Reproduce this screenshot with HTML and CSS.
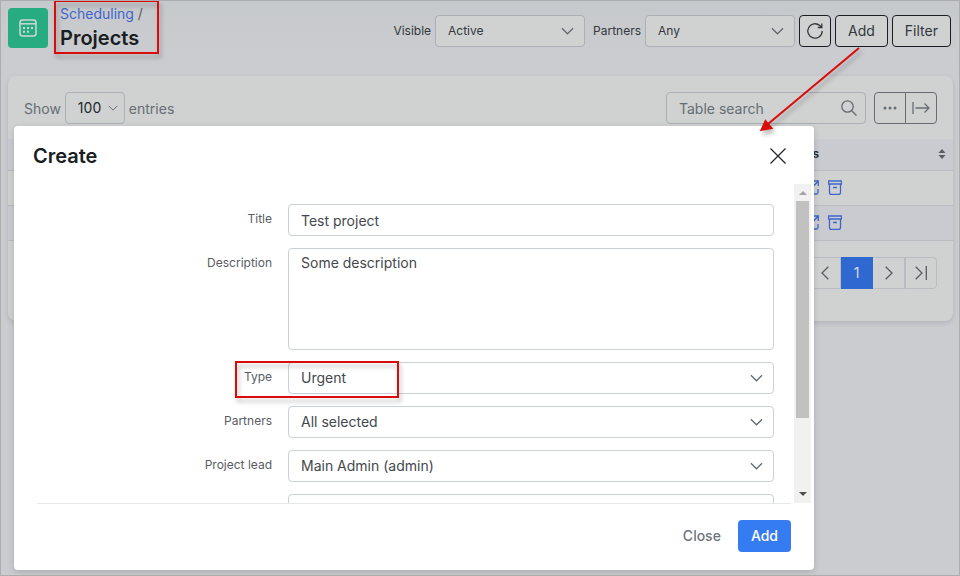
FILE: index.html
```html
<!DOCTYPE html>
<html lang="en">
<head>
<meta charset="utf-8">
<title>Projects</title>
<link rel="stylesheet" href="styles.css">
</head>
<body>
<svg class="sprite" aria-hidden="true">
  <symbol id="chevron" viewBox="0 0 14 8"><path d="M1 1l6 6 6-6"/></symbol>
  <symbol id="archive" viewBox="0 0 14 15"><path d="M.5 1h13v3H.5zM1.500 4v8.500q0 2 2 2h7q2 0 2-2V4M5 7.500h4"/></symbol>
  <symbol id="link" viewBox="0 0 14 15"><path d="M6 1H2.500Q1 1 1 2.500v10Q1 14 2.500 14h9q1.500 0 1.500-1.500V9M6 8.500l7-7M9 1h4.300V6"/></symbol>
</svg>
<div class="page">
  <header class="topbar">
    <div class="brand">
      <svg viewBox="0 0 18 18"><rect x="1" y="1" width="16" height="16" rx="2.500"/><path d="M1 4.800h16"/><path class="dots" d="M8 9h2M12 9h2M4 9h2M4 12.800h2M8 12.800h2"/></svg>
    </div>
    <div class="heading">
      <nav class="crumbs"><a href="#">Scheduling</a> /</nav>
      <h1>Projects</h1>
    </div>
    <div class="filters">
      <label for="visible">Visible</label>
      <span class="pick filter-pick"><select id="visible"><option>Active</option></select><svg><use href="#chevron"/></svg></span>
      <label for="partner-filter">Partners</label>
      <span class="pick filter-pick"><select id="partner-filter"><option>Any</option></select><svg><use href="#chevron"/></svg></span>
      <button class="btn square" type="button" aria-label="Refresh"><svg width="18" height="18" viewBox="0 0 18 18"><path d="M16.200 9A7.200 7.200 0 1 1 14 3.800l1.500 1.500M15.800 1.500v4h-4"/></svg></button>
      <button class="btn" type="button">Add</button>
      <button class="btn" type="button">Filter</button>
    </div>
  </header>

  <main class="card">
    <div class="toolbar">
      <label for="length">Show</label>
      <span class="pick length-pick"><select id="length"><option>100</option></select><svg><use href="#chevron"/></svg></span>
      <span class="after">entries</span>
      <div class="search">
        <input type="text" placeholder="Table search" aria-label="Table search">
        <svg viewBox="0 0 16 16"><circle cx="6.500" cy="6.500" r="5.700"/><path d="M10.700 10.700l4.800 4.800"/></svg>
      </div>
      <div class="group">
        <button type="button" aria-label="More"><svg class="more" width="14" height="4" viewBox="0 0 14 4"><circle cx="2" cy="2" r="1.500"/><circle cx="7" cy="2" r="1.500"/><circle cx="12" cy="2" r="1.500"/></svg></button>
        <button type="button" aria-label="Expand"><svg width="18" height="12" viewBox="0 0 18 12"><path d="M1 0v12M3.500 6H17M12.500 1.500L17 6l-4.500 4.500"/></svg></button>
      </div>
    </div>
    <table>
      <thead>
        <tr><th class="rest"></th><th class="actions"><div>Actions<svg width="8" height="10" viewBox="0 0 8 10"><path d="M.5 4L4 0l3.500 4zM.5 6L4 10l3.500-4z"/></svg></div></th></tr>
      </thead>
      <tbody>
        <tr><td></td><td><div class="icons"><a href="#" aria-label="Open"><svg><use href="#link"/></svg></a><a href="#" aria-label="Archive"><svg><use href="#archive"/></svg></a></div></td></tr>
        <tr><td></td><td><div class="icons"><a href="#" aria-label="Open"><svg><use href="#link"/></svg></a><a href="#" aria-label="Archive"><svg><use href="#archive"/></svg></a></div></td></tr>
      </tbody>
    </table>
    <nav class="pager" aria-label="Pages">
      <button type="button" aria-label="Previous"><svg width="8" height="14" viewBox="0 0 8 14"><path d="M7.300.7L1 7l6.300 6.300"/></svg></button>
      <button type="button" class="current">1</button>
      <button type="button" aria-label="Next"><svg width="8" height="14" viewBox="0 0 8 14"><path d="M.7.7L7 7 .7 13.300"/></svg></button>
      <button type="button" aria-label="Last"><svg width="12" height="14" viewBox="0 0 12 14"><path d="M.7.7L7 7 .7 13.300M11.300 0v14"/></svg></button>
    </nav>
  </main>

  <section class="modal" role="dialog" aria-labelledby="modal-title">
    <header class="modal-head">
      <h2 id="modal-title">Create</h2>
      <button type="button" aria-label="Close dialog"><svg width="16" height="16" viewBox="0 0 16 16"><path d="M.5.5l15 15M15.500.5l-15 15"/></svg></button>
    </header>
    <div class="modal-body">
      <form class="form">
        <label for="title">Title</label>
        <input id="title" type="text" value="Test project">
        <label for="description">Description</label>
        <textarea id="description">Some description</textarea>
        <label for="type">Type</label>
        <span class="pick"><select id="type"><option>Urgent</option></select><svg><use href="#chevron"/></svg></span>
        <label for="partners">Partners</label>
        <span class="pick"><select id="partners"><option>All selected</option></select><svg><use href="#chevron"/></svg></span>
        <label for="lead">Project lead</label>
        <span class="pick"><select id="lead"><option>Main Admin (admin)</option></select><svg><use href="#chevron"/></svg></span>
        <span></span>
        <span class="pick"><select aria-label="Next field"></select></span>
      </form>
      <div class="scrollbar" aria-hidden="true">
        <svg class="up" viewBox="0 0 8 4"><path d="M0 4l4-4 4 4z"/></svg>
        <div class="track"><div class="thumb"></div></div>
        <svg class="down" viewBox="0 0 8 4"><path d="M0 0l4 4 4-4z"/></svg>
      </div>
    </div>
    <footer class="modal-foot">
      <button type="button" class="plain">Close</button>
      <button type="button" class="primary">Add</button>
    </footer>
  </section>

  <svg class="marks" width="960" height="576" viewBox="0 0 960 576" aria-hidden="true">
    <rect x="55" y="1" width="103" height="52"/>
    <rect x="236" y="362" width="162" height="35"/>
    <path d="M859 48L768 124"/>
    <path class="tip" d="M761.500 130l4-9 6 7z"/>
  </svg>
</div>
</body>
</html>
```
FILE: styles.css
```css
* { box-sizing: border-box; }

body {
  margin: 0;
  font: 14px/20px Inter, "Liberation Sans", sans-serif;
  color: #575d63;
  background: #cbccd0;
}

button, input, select, textarea {
  margin: 0;
  font: inherit;
  color: inherit;
}

svg { fill: none; stroke: currentColor; stroke-width: 1.300; flex: none; }
h1, h2 { margin: 0; font-weight: 600; color: #191e22; }
a { color: #3f65cc; text-decoration: none; }

.sprite { position: absolute; width: 0; height: 0; }

.page {
  position: relative;
  min-height: 100vh;
  padding: 0 6px 0 7px;
  border: 1px solid #adadad;
  background: linear-gradient(#c6c9cc, #cbccd0 60px);
  overflow: hidden;
}

/* Top bar */
.topbar { display: flex; height: 75px; padding: 3px 2px 0 0; }

.brand {
  display: grid;
  place-items: center;
  width: 40px;
  height: 40px;
  margin: 4px 12px 0 0;
  border-radius: 4px;
  background: #27ab80;
  color: #d0d7d2;
}
.brand svg { width: 18px; height: 18px; stroke-width: 1.500; }
.brand .dots { stroke-width: 2; }

.crumbs { line-height: 20px; }
.heading h1 { font-size: 20px; line-height: 28px; }

.filters {
  display: flex;
  align-items: center;
  gap: 4px;
  height: 32px;
  margin: 11px 0 0 auto;
  font-size: 12px;
  color: #33383d;
}
.filter-pick { width: 150px; }
.filter-pick + label { margin-left: 4px; }

.btn {
  height: 32px;
  padding: 0 12px;
  border: 1px solid #191e22;
  border-radius: 4px;
  background: #d0d2d1;
  font-size: 14px;
}
.btn.square { display: grid; place-items: center; width: 32px; padding: 0; }

/* Select boxes with a drawn arrow */
.pick { position: relative; display: block; height: 32px; }
.pick select {
  appearance: none;
  width: 100%;
  height: 32px;
  padding: 0 12px;
  border: 1px solid #aab0b6;
  border-radius: 4px;
  background: #d0d2d1;
}
.pick svg {
  position: absolute;
  right: 11px;
  top: 12px;
  width: 13px;
  height: 8px;
  pointer-events: none;
  color: #60676d;
}

/* Card */
.card {
  height: 245px;
  padding-top: 16px;
  border-radius: 8px;
  background: #d0d2d1;
  box-shadow: 0 2px 5px rgba(80, 85, 105, .2);
}

.toolbar {
  display: flex;
  align-items: center;
  gap: 4px;
  padding: 0 16px;
  color: #666d73;
}
.toolbar label, .toolbar .after { padding-top: 2px; }
.length-pick { width: 60px; color: #24282c; }
.length-pick svg { right: 7px; width: 10px; }

.search { position: relative; width: 200px; margin-left: auto; }
.search input {
  display: block;
  width: 100%;
  height: 32px;
  padding: 1px 12px 0;
  border: 1px solid #aab0b6;
  border-radius: 4px;
  background: transparent;
}
.search input::placeholder { color: #666d73; opacity: 1; }
.search svg { position: absolute; right: 9px; top: 8px; width: 16px; height: 16px; }

.group { display: flex; margin-left: 4px; }
.group button {
  display: grid;
  place-items: center;
  width: 32px;
  height: 32px;
  padding: 0;
  border: 1px solid #666d73;
  border-radius: 4px 0 0 4px;
  background: transparent;
}
.group button + button { margin-left: -1px; border-radius: 0 4px 4px 0; }
.more { fill: currentColor; stroke: none; }

table { width: 100%; margin-top: 15px; border-collapse: collapse; table-layout: fixed; }
th, td { height: 35px; padding: 0 8px; border-bottom: 1px solid #b9bdc1; text-align: left; }
th { height: 31px; font-size: 12px; font-weight: 600; color: #24282c; }
thead tr, tbody tr:nth-child(even) { background: #cacbd0; }
.actions { width: 190px; }
.actions div { display: flex; align-items: center; justify-content: space-between; }
.actions svg { fill: #575d63; stroke: none; }
.icons { display: flex; justify-content: flex-start; gap: 9px; padding-left: 34px; }
.icons a { display: flex; }
.icons svg { width: 14px; height: 15px; }
th.actions { padding: 0 7px 0 12px; }

.pager { display: flex; justify-content: flex-end; padding: 16px 16px 0; }
.pager button {
  display: grid;
  place-items: center;
  width: 32px;
  height: 32px;
  padding: 0;
  border: 1px solid #b9bdc1;
  border-left-width: 0;
  background: transparent;
}
.pager button:last-child { border-left-width: 1px; border-radius: 0 4px 4px 0; }
.pager .current { border-color: #2e68d0; background: #2e68d0; color: #d8dde2; }

/* Dialog */
.modal {
  position: absolute;
  top: 125px;
  left: 13px;
  right: 145px;
  border-radius: 4px;
  background: #fff;
  box-shadow: 0 2px 6px rgba(40, 45, 60, .2);
}
.modal-head {
  display: flex;
  align-items: center;
  justify-content: space-between;
  height: 58px;
  padding: 2px 28px 0 19px;
}
.modal-head h2 { font-size: 20px; line-height: 28px; }
.modal-head button { display: flex; padding: 0; border: 0; background: none; color: #24282c; }

.modal-body { display: flex; height: 319px; padding-right: 3px; overflow: hidden; }
.form {
  flex: 1;
  display: grid;
  grid-template-columns: 235px 1fr;
  grid-auto-rows: max-content;
  gap: 12px 16px;
  padding: 20px 20px 0 23px;
}
.form label { padding-top: 5px; font-size: 12px; text-align: right; }
.form input, .form textarea {
  display: block;
  width: 100%;
  height: 32px;
  padding: 1px 12px 0;
  border: 1px solid #cbcfd8;
  border-radius: 4px;
  background: #fff;
  color: #43484d;
  resize: none;
}
.form textarea { height: 102px; padding-top: 4px; }
.form select { border-color: #cbcfd8; background: #fff; color: #43484d; }

.scrollbar {
  display: flex;
  flex-direction: column;
  align-items: center;
  width: 17px;
  padding: 7px 2px;
  background: #f1f1f1;
}
.scrollbar svg { width: 8px; height: 4px; fill: #505050; stroke: none; }
.scrollbar .up { fill: #a3a3a3; }
.track { flex: 1; align-self: stretch; padding-top: 6px; }
.thumb { height: 217px; background: #c1c1c1; }

.modal-foot {
  display: flex;
  justify-content: flex-end;
  gap: 4px;
  margin: 0 23px;
  padding: 16px 0 18px;
  border-top: 1px solid #e7e8eb;
}
.modal-foot button { height: 32px; padding: 0 13px; border: 0; border-radius: 4px; font-weight: 500; }
.plain { background: none; color: #6c757d; }
.modal-foot .primary { background: #357bf2; color: #fff; }

/* Callouts over the page */
.marks { position: absolute; top: -1px; left: -1px; pointer-events: none; filter: drop-shadow(2px 4px 2px rgba(0, 0, 0, .25)); }
.marks rect, .marks path { stroke: #d90b0b; stroke-width: 2; }
.marks .tip { fill: #d90b0b; }
```
